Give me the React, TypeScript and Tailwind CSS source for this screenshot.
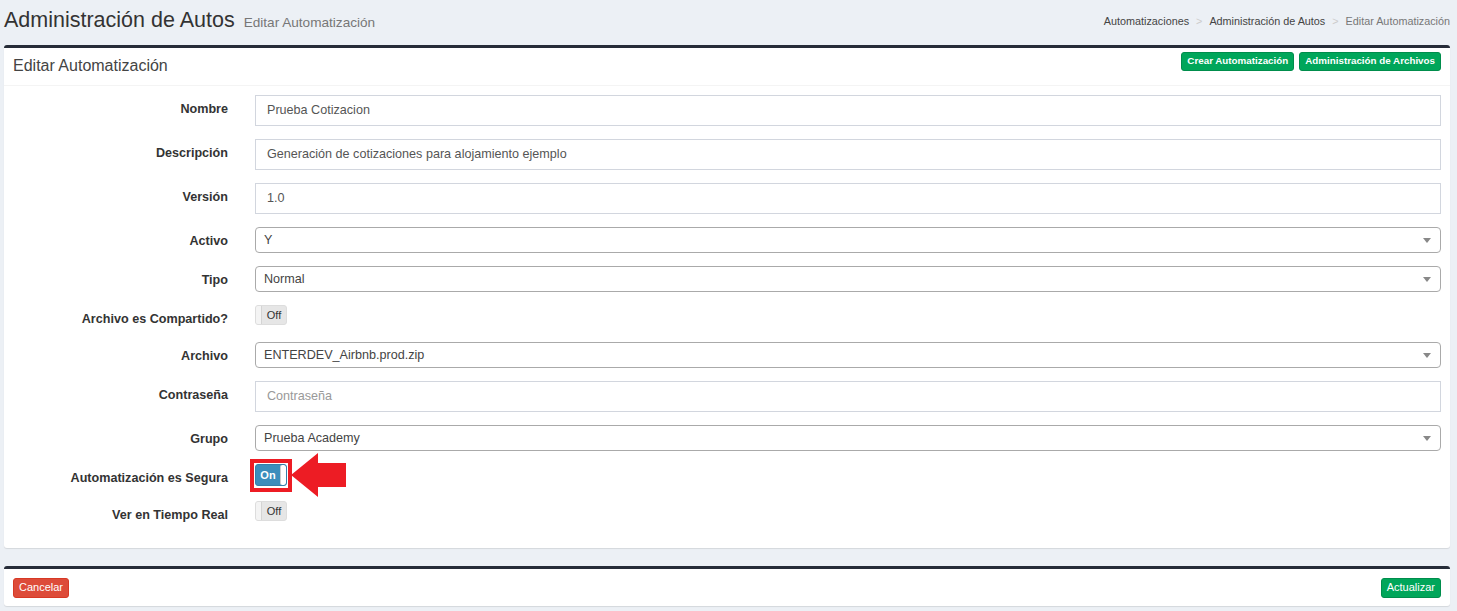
import React from 'react';

const font = { fontFamily: '"Liberation Sans", Arial, sans-serif' };

const Label: React.FC<{ text: string }> = ({ text }) => (
    <div className="w-[224px] shrink-0 text-right pt-[7px] text-[12.6px] leading-[15px] font-bold text-[#333]">{text}</div>
);

const TextInput: React.FC<{ value?: string; placeholder?: string }> = ({ value, placeholder }) => (
    <div className="h-[31px] flex items-center border border-[#d2d6de] bg-white px-[11px] text-[12.6px]">
        {value ? <span className="text-[#555]">{value}</span> : <span className="text-[#999]">{placeholder}</span>}
    </div>
);

const Select: React.FC<{ value: string }> = ({ value }) => (
    <div className="h-[26px] flex items-center justify-between border border-[#aaa] rounded-[4px] bg-white pl-[8px] pr-[9px] text-[12.6px] text-[#444]">
        <span>{value}</span>
        <span className="w-0 h-0 border-l-[4px] border-r-[4px] border-t-[5px] border-l-transparent border-r-transparent border-t-[#888]" />
    </div>
);

const Toggle: React.FC<{ on?: boolean }> = ({ on }) =>
    on ? (
        <div className="h-[22px] w-[32px] flex items-center bg-[#3c8dbc] border border-[#367fa9] rounded-[3px] overflow-hidden">
            <span className="flex-1 text-center text-white text-[11px] font-bold">On</span>
            <span className="w-[6px] h-full bg-white border-l border-[#ccc] rounded-[2px]" />
        </div>
    ) : (
        <div className="h-[20px] w-[32px] flex items-center bg-[#e6e6e6] border border-[#ddd] rounded-[3px] overflow-hidden">
            <span className="w-[6px] h-full bg-[#f4f4f4] border-r border-[#d4d4d4]" />
            <span className="flex-1 text-center text-[#333] text-[11px]">Off</span>
        </div>
    );

const Row: React.FC<{ label: string; h: string; children: React.ReactNode }> = ({ label, h, children }) => (
    <div className={`flex mb-[13px] ${h}`}>
        <Label text={label} />
        <div className="flex-1 ml-[27px] mr-[9px]">{children}</div>
    </div>
);

export default function App() {
    return (
        <div className="min-h-[611px] bg-[#ecf0f5] pb-[5px]" style={font}>
            {/* page header */}
            <div className="h-[45px] flex items-start justify-between px-[4px]">
                <div className="flex items-baseline pt-[5px]">
                    <h1 className="text-[21.5px] leading-[30px] text-[#333]">Administración de Autos</h1>
                    <span className="ml-[9px] text-[13.6px] text-[#777]">Editar Automatización</span>
                </div>
                <div className="flex items-center pt-[13px] pr-[3px] text-[10.8px] text-[#444]">
                    <span>Automatizaciones</span>
                    <span className="mx-[7px] text-[#ccc]">&gt;</span>
                    <span>Administración de Autos</span>
                    <span className="mx-[7px] text-[#ccc]">&gt;</span>
                    <span className="text-[#777]">Editar Automatización</span>
                </div>
            </div>

            {/* main box */}
            <div className="ml-[4px] mr-[7px] bg-white border-t-[3px] border-[#262c38] rounded-[3px] shadow-[0_1px_1px_rgba(0,0,0,0.1)]">
                <div className="h-[38px] flex items-start justify-between pl-[9px] pr-[9px] border-b border-[#f4f4f4]">
                    <span className="pt-[6px] text-[16px] text-[#444]">Editar Automatización</span>
                    <div className="flex gap-[5px] pt-[4px]">
                        <button className="h-[19px] px-[5px] bg-[#00a65a] border border-[#008d4c] rounded-[3px] text-white text-[9.8px] font-bold">Crear Automatización</button>
                        <button className="h-[19px] px-[5px] bg-[#00a65a] border border-[#008d4c] rounded-[3px] text-white text-[9.8px] font-bold">Administración de Archivos</button>
                    </div>
                </div>
                <div className="pt-[9px] pb-[10px]">
                    <Row label="Nombre" h="h-[31px]"><TextInput value="Prueba Cotizacion" /></Row>
                    <Row label="Descripción" h="h-[31px]"><TextInput value="Generación de cotizaciones para alojamiento ejemplo" /></Row>
                    <Row label="Versión" h="h-[31px]"><TextInput value="1.0" /></Row>
                    <Row label="Activo" h="h-[26px]"><Select value="Y" /></Row>
                    <Row label="Tipo" h="h-[26px]"><Select value="Normal" /></Row>
                    <Row label="Archivo es Compartido?" h="h-[24px]"><Toggle /></Row>
                    <Row label="Archivo" h="h-[26px]"><Select value="ENTERDEV_Airbnb.prod.zip" /></Row>
                    <Row label="Contraseña" h="h-[31px]"><TextInput placeholder="Contraseña" /></Row>
                    <Row label="Grupo" h="h-[26px]"><Select value="Prueba Academy" /></Row>
                    <Row label="Automatización es Segura" h="h-[24px]">
                        <div className="relative w-[32px]">
                            <Toggle on />
                            <div className="absolute left-[-5px] top-[-5px] w-[42px] h-[33px] border-[4px] border-[#ed1c24]" />
                            <svg className="absolute left-[36px] top-[-11px]" width="56" height="45" viewBox="0 0 56 45">
                                <polygon points="0,22 27,0 27,10 55,10 55,34 27,34 27,44" fill="#ed1c24" />
                            </svg>
                        </div>
                    </Row>
                    <Row label="Ver en Tiempo Real" h="h-[24px]"><Toggle /></Row>
                </div>
            </div>

            {/* footer box */}
            <div className="mt-[18px] ml-[4px] mr-[7px] bg-white border-t-[3px] border-[#262c38] rounded-[3px] shadow-[0_1px_1px_rgba(0,0,0,0.1)] h-[40px] flex items-center justify-between px-[9px]">
                <button className="h-[20px] px-[5px] bg-[#dd4b39] border border-[#d73925] rounded-[3px] text-white text-[11px]">Cancelar</button>
                <button className="h-[20px] px-[5px] bg-[#00a65a] border border-[#008d4c] rounded-[3px] text-white text-[11px]">Actualizar</button>
            </div>
        </div>
    );
}
